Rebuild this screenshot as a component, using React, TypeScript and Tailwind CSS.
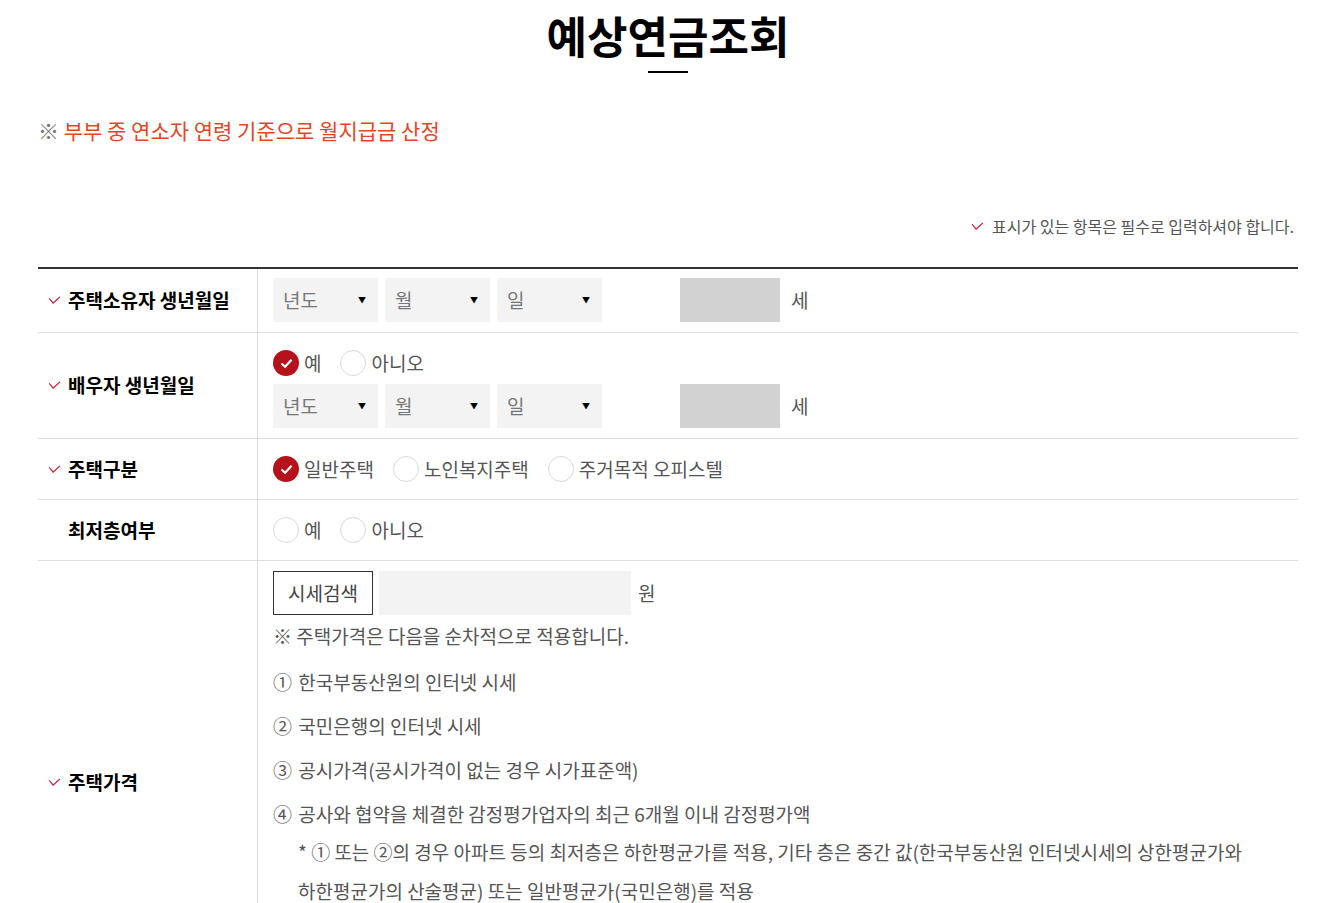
import { ReactNode } from 'react';

const font = { fontFamily: '"Noto Sans CJK KR", "Noto Sans", sans-serif' };

function Check({ className = '' }: { className?: string }) {
  return (
    <svg viewBox="0 0 14 10" className={className} fill="none" stroke="currentColor" strokeWidth="1.3">
      <path d="M1 2.5 L5.5 8 L13 1" />
    </svg>
  );
}

function Radio({ checked, label, className = '' }: { checked?: boolean; label: string; className?: string }) {
  return (
    <label className={`flex items-center gap-[5px] ${className}`}>
      {checked ? (
        <span className="flex h-[26px] w-[26px] items-center justify-center rounded-full bg-[#b5121b]">
          <svg viewBox="0 0 14 12" className="h-[11px] w-[13px]" fill="none" stroke="white" strokeWidth="2.4">
            <path d="M1.5 6 L5.5 9.5 L12.5 2" />
          </svg>
        </span>
      ) : (
        <span className="h-[26px] w-[26px] rounded-full border border-[#d9d9d9] bg-white" />
      )}
      <span className="text-[19px] leading-[26px] text-[#555]">{label}</span>
    </label>
  );
}

function Select({ text }: { text: string }) {
  return (
    <div className="flex h-[44px] w-[105px] items-center justify-between bg-[#f3f3f3] pl-[10px] pr-[12px]">
      <span className="text-[19px] text-[#777]">{text}</span>
      <span className="text-[8px] text-black">▼</span>
    </div>
  );
}

function DateRow() {
  return (
    <div className="flex items-center">
      <div className="flex gap-[7px]">
        <Select text="년도" />
        <Select text="월" />
        <Select text="일" />
      </div>
      <div className="ml-[78px] h-[44px] w-[100px] bg-[#d2d2d2]" />
      <span className="ml-[11px] text-[19px] text-[#555]">세</span>
    </div>
  );
}

function Row({ label, required = true, children, className = '' }: { label: string; required?: boolean; children: ReactNode; className?: string }) {
  return (
    <div className="flex border-b border-[#ddd]">
      <div className="flex w-[220px] shrink-0 items-center border-r border-[#ddd] pl-[10px]">
        <span className="w-[20px]">{required && <Check className="h-[9px] w-[13px] text-[#c8102e]" />}</span>
        <span className="text-[19px] font-bold text-black">{label}</span>
      </div>
      <div className={`flex-1 pl-[15px] ${className}`}>{children}</div>
    </div>
  );
}

const priceRules = [
  ['①', '한국부동산원의 인터넷 시세'],
  ['②', '국민은행의 인터넷 시세'],
  ['③', '공시가격(공시가격이 없는 경우 시가표준액)'],
  ['④', '공사와 협약을 체결한 감정평가업자의 최근 6개월 이내 감정평가액'],
];

export default function App() {
  return (
    <div className="h-[903px] overflow-hidden bg-white" style={font}>
      <div className="ml-[38px] w-[1260px]">
        <div className="flex flex-col items-center pt-[3px]">
          <h1 className="text-[44px] font-bold leading-[64px] text-black">예상연금조회</h1>
          <div className="mt-[4px] h-[2px] w-[40px] bg-black" />
        </div>

        <p className="mt-[42px] text-[21px] leading-[30px]">
          <span className="text-[#777]">※</span> <span className="text-[#e8441f]">부부 중 연소자 연령 기준으로 월지급금 산정</span>
        </p>

        <div className="mt-[69px] flex items-center justify-end gap-[8px] pr-[4px]">
          <Check className="h-[9px] w-[13px] text-[#c8102e]" />
          <span className="text-[16px] text-[#555]">표시가 있는 항목은 필수로 입력하셔야 합니다.</span>
        </div>

        <div className="mt-[29px] border-t-2 border-[#333]">
          <Row label="주택소유자 생년월일" className="pt-[9px] pb-[10px]">
            <DateRow />
          </Row>
          <Row label="배우자 생년월일" className="pt-[17px] pb-[10px]">
            <div className="flex items-center">
              <Radio checked label="예" />
              <Radio label="아니오" className="ml-[19px]" />
            </div>
            <div className="mt-[8px]">
              <DateRow />
            </div>
          </Row>
          <Row label="주택구분" className="flex h-[60px] items-center">
            <Radio checked label="일반주택" />
            <Radio label="노인복지주택" className="ml-[19px]" />
            <Radio label="주거목적 오피스텔" className="ml-[19px]" />
          </Row>
          <Row label="최저층여부" required={false} className="flex h-[60px] items-center">
            <Radio label="예" />
            <Radio label="아니오" className="ml-[19px]" />
          </Row>
          <Row label="주택가격" className="pt-[10px] pb-[94px]">
            <div className="flex items-center">
              <button className="h-[44px] w-[100px] border border-[#333] text-[19px] text-[#444]">시세검색</button>
              <div className="ml-[6px] h-[44px] w-[252px] bg-[#f3f3f3]" />
              <span className="ml-[7px] text-[19px] text-[#555]">원</span>
            </div>
            <p className="mt-[4px] text-[19px] leading-[34px] text-[#555]">※ 주택가격은 다음을 순차적으로 적용합니다.</p>
            <ul className="mt-[7px] text-[19px] text-[#555]">
              {priceRules.map(([num, text]) => (
                <li key={num} className="leading-[44px]">
                  <span className="mr-[2px]">{num}</span> {text}
                </li>
              ))}
            </ul>
            <p className="mt-[-4px] pl-[25px] text-[19px] leading-[39px] text-[#555]">
              * ① 또는 ②의 경우 아파트 등의 최저층은 하한평균가를 적용, 기타 층은 중간 값(한국부동산원 인터넷시세의 상한평균가와
              <br />
              하한평균가의 산술평균) 또는 일반평균가(국민은행)를 적용
            </p>
          </Row>
        </div>
      </div>
    </div>
  );
}
